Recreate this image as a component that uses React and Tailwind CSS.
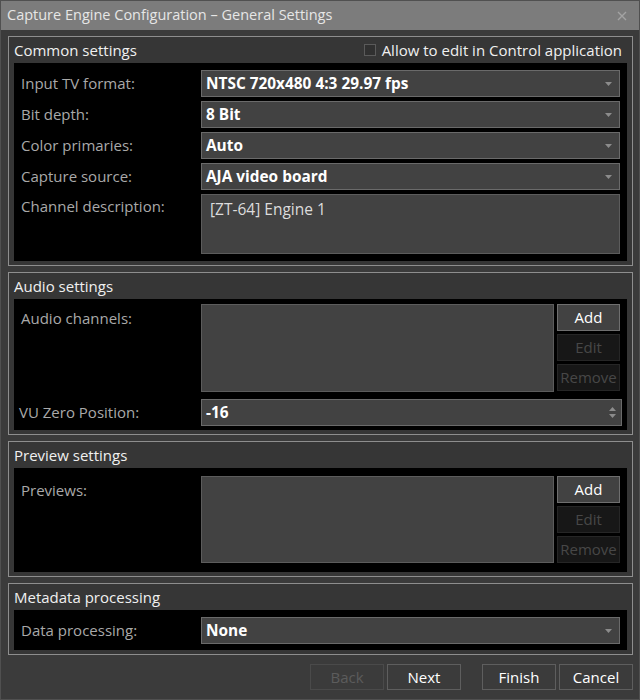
const font = { fontFamily: '"Open Sans", "Noto Sans", sans-serif' };

const Arrow = () => (
  <svg width="7" height="4" viewBox="0 0 7 4" className="shrink-0">
    <path d="M0 0h7L3.5 4z" fill="#8c8c8c" />
  </svg>
);

const Combo = ({ value }) => (
  <div className="h-[27px] flex items-center justify-between border border-[#6a6a6a] bg-[#424242] pl-[4px] pr-[7px]">
    <span className="text-[15.4px] font-bold text-white leading-none">{value}</span>
    <Arrow />
  </div>
);

const Label = ({ children, className = '' }) => (
  <div className={`text-[15px] text-[#a9a9a9] leading-none ${className}`}>{children}</div>
);

const SideButton = ({ children, disabled }) =>
  disabled ? (
    <div className="h-[27px] flex items-center justify-center border border-[#262626] bg-[#171717] text-[15px] text-[#474747]">
      {children}
    </div>
  ) : (
    <div className="h-[27px] flex items-center justify-center border border-[#6f6f6f] bg-[#424242] text-[15px] text-white">
      {children}
    </div>
  );

const Group = ({ title, right, children }) => (
  <div className="border border-[#8e8e8e] bg-[#363636] px-[5px] pb-[4px]">
    <div className="h-[26px] flex items-center justify-between pr-[5px]">
      <span className="text-[15px] text-[#f0f0f0] leading-none">{title}</span>
      {right}
    </div>
    <div className="bg-black">{children}</div>
  </div>
);

const ListWithButtons = ({ label, height }) => (
  <div className="flex">
    <Label className="w-[180px] pt-[7px]">{label}</Label>
    <div className={`flex-1 border border-[#5c5c5c] bg-[#424242] ${height}`} />
    <div className="w-[63px] ml-[3px] flex flex-col gap-[3px]">
      <SideButton>Add</SideButton>
      <SideButton disabled>Edit</SideButton>
      <SideButton disabled>Remove</SideButton>
    </div>
  </div>
);

const FooterButton = ({ children, disabled }) => (
  <div
    className={`w-[74px] h-[26px] flex items-center justify-center border text-[15px] ${
      disabled ? 'border-[#4a4a4a] text-[#5c5c5c]' : 'border-[#5e5e5e] text-white'
    }`}
  >
    {children}
  </div>
);

export default function App() {
  return (
    <div className="w-[640px] h-[700px] bg-[#3b3b3b] flex flex-col border border-[#505050]" style={font}>
      {/* Title bar */}
      <div className="h-[29px] shrink-0 bg-[#7c7c7c] flex items-center justify-between pl-[6px] pr-[12px]">
        <span className="text-[14.5px] text-[#e6e6e6] leading-none">Capture Engine Configuration – General Settings</span>
        <svg width="10" height="10" viewBox="0 0 10 10">
          <path d="M1 1l8 8M9 1l-8 8" stroke="#a3a3a3" strokeWidth="1.4" />
        </svg>
      </div>

      <div className="flex flex-col gap-[6px] pl-[7px] pr-[6px] pt-[6px]">
        <Group
          title="Common settings"
          right={
            <div className="flex items-center gap-[6px]">
              <div className="w-[12px] h-[12px] border border-[#5a5a5a] bg-[#303030]" />
              <span className="text-[15px] text-[#f0f0f0] leading-none">Allow to edit in Control application</span>
            </div>
          }
        >
          <div className="grid grid-cols-[180px_1fr] gap-y-[4px] items-center pl-[7px] pr-[7px] pt-[7px] pb-[7px]">
            <Label>Input TV format:</Label>
            <Combo value="NTSC 720x480 4:3 29.97 fps" />
            <Label>Bit depth:</Label>
            <Combo value="8 Bit" />
            <Label>Color primaries:</Label>
            <Combo value="Auto" />
            <Label>Capture source:</Label>
            <Combo value="AJA video board" />
            <Label className="self-start pt-[5px]">Channel description:</Label>
            <div className="h-[60px] border border-[#5c5c5c] bg-[#424242] px-[8px] pt-[7px] text-[15.5px] text-[#dcdcdc] leading-none">
              [ZT-64] Engine 1
            </div>
          </div>
        </Group>

        <Group title="Audio settings">
          <div className="pl-[7px] pr-[7px] pt-[5px] pb-[4px] flex flex-col gap-[7px]">
            <ListWithButtons label="Audio channels:" height="h-[88px]" />
            <div className="flex items-center">
              <Label className="w-[180px] -ml-[2px]">VU Zero Position:</Label>
              <div className="flex-1 ml-[2px] -mr-[2px] h-[27px] flex items-center justify-between border border-[#6a6a6a] bg-[#424242] pl-[4px] pr-[5px]">
                <span className="text-[15.4px] font-bold text-white leading-none">-16</span>
                <svg width="7" height="11" viewBox="0 0 7 11">
                  <path d="M0 4h7L3.5 0zM0 7h7L3.5 11z" fill="#8c8c8c" />
                </svg>
              </div>
            </div>
          </div>
        </Group>

        <Group title="Preview settings">
          <div className="pl-[7px] pr-[7px] pt-[8px] pb-[9px]">
            <ListWithButtons label="Previews:" height="h-[87px]" />
          </div>
        </Group>

        <Group title="Metadata processing">
          <div className="grid grid-cols-[180px_1fr] items-center pl-[7px] pr-[7px] pt-[7px] pb-[6px]">
            <Label>Data processing:</Label>
            <Combo value="None" />
          </div>
        </Group>
      </div>

      <div className="flex justify-end items-center pt-[9px] pr-[6px]">
        <div className="flex gap-[3px]">
          <FooterButton disabled>Back</FooterButton>
          <FooterButton>Next</FooterButton>
        </div>
        <div className="flex gap-[3px] ml-[21px]">
          <FooterButton>Finish</FooterButton>
          <FooterButton>Cancel</FooterButton>
        </div>
      </div>
    </div>
  );
}
